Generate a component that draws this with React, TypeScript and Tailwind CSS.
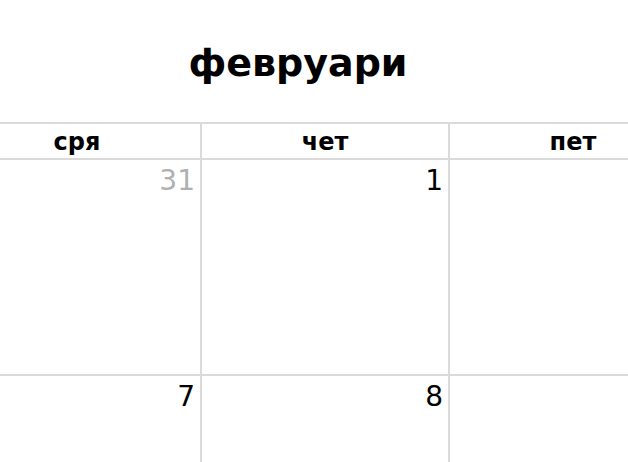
import React from 'react';

interface DayCell {
  day: number;
  muted?: boolean;
}

const weekdays = ['сря', 'чет', 'пет'];

const weeks: (DayCell | null)[][] = [
  [{ day: 31, muted: true }, { day: 1 }, null],
  [{ day: 7 }, { day: 8 }, null],
];

const App: React.FC = () => {
  return (
    <div
      className="w-[628px] h-[462px] overflow-hidden bg-white text-black"
      style={{ fontFamily: '"DejaVu Sans", Verdana, sans-serif' }}
    >
      <div className="w-[596px] h-[122px] pt-[38px] text-center">
        <h1 className="text-[38px] font-bold leading-[50px]">февруари</h1>
      </div>

      <div className="ml-[-46px] w-[744px]">
        {/* day names */}
        <div className="grid grid-cols-[repeat(3,248px)] border-y-2 border-[#dadada]">
          {weekdays.map((name) => (
            <div
              key={name}
              className="h-[34px] border-r-2 border-[#dadada] text-center text-[24px] font-bold leading-[37px]"
            >
              {name}
            </div>
          ))}
        </div>

        {/* weeks */}
        {weeks.map((week, i) => (
          <div
            key={`week-${i}`}
            className="grid grid-cols-[repeat(3,248px)] border-b-2 border-[#dadada]"
          >
            {week.map((cell, j) => (
              <div
                key={`cell-${i}-${j}`}
                className="h-[214px] border-r-2 border-[#dadada] pr-[5px] pt-[7px] text-right"
              >
                {cell && (
                  <span
                    className={`text-[28px] leading-none ${cell.muted ? 'text-[#b0b0b0]' : 'text-black'}`}
                  >
                    {cell.day}
                  </span>
                )}
              </div>
            ))}
          </div>
        ))}
      </div>
    </div>
  );
};

export default App;
